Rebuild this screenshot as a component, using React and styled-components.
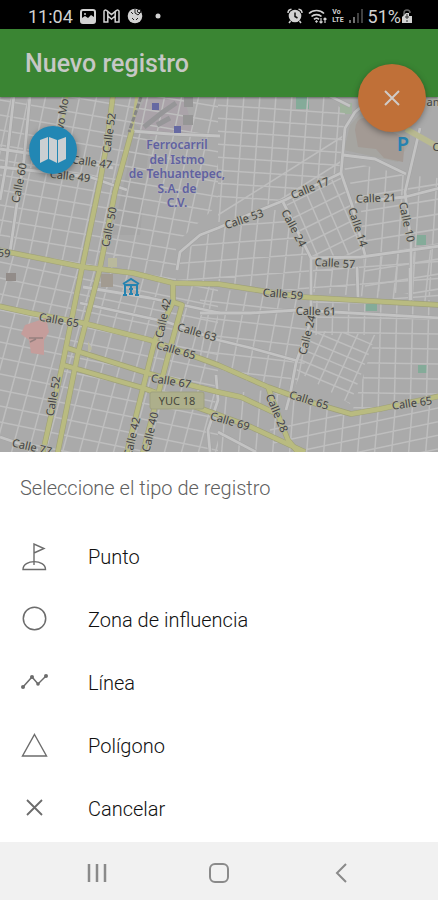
import React from "react";
import styled, { createGlobalStyle } from "styled-components";

const GlobalStyle = createGlobalStyle`
  *, *::before, *::after { box-sizing: border-box; }
  body {
    margin: 0;
    background: #ffffff;
    font-family: Roboto, "Liberation Sans", sans-serif;
  }
  button { font: inherit; border: 0; padding: 0; cursor: pointer; }
`;

const Screen = styled.div`
  display: flex;
  flex-direction: column;
  min-height: 100vh;
`;

const StatusBar = styled.div`
  display: flex;
  align-items: center;
  justify-content: space-between;
  height: 29px;
  padding: 3px 25px 0 28px;
  background: #000000;
  color: #d2d2d2;
  font-size: 18px;
`;

const StatusGroup = styled.div`
  display: flex;
  align-items: center;
  gap: ${(p) => p.$gap}px;
`;

const NetworkLabel = styled.span`
  font-size: 7px;
  line-height: 8px;
  font-weight: 700;
`;

const Battery = styled.span`
  display: flex;
  align-items: center;
`;

const AppBar = styled.header`
  position: relative;
  z-index: 1;
  display: flex;
  align-items: center;
  height: 68px;
  padding: 0 25px;
  background: #3a8533;
  box-shadow: 0 1px 2px rgba(0, 0, 0, 0.4);
`;

const Title = styled.h1`
  margin: 0;
  font-size: 25px;
  font-weight: 500;
  color: #c6c8c5;
`;

const RoundButton = styled.button`
  position: absolute;
  display: flex;
  align-items: center;
  justify-content: center;
  border-radius: 50%;
  box-shadow: 0 2px 6px rgba(0, 0, 0, 0.35);
`;

const CloseButton = styled(RoundButton)`
  right: 12px;
  bottom: -35px;
  width: 68px;
  height: 68px;
  background: #c07038;
  color: #d0cbc8;
`;

const LayersButton = styled(RoundButton)`
  left: 29px;
  top: 29px;
  width: 48px;
  height: 48px;
  background: #2287b4;
  color: #cbcfd2;
`;

const MapArea = styled.main`
  position: relative;
  flex: 1 1 0;
  min-height: 240px;
  background: #adadad;
`;

const MapDrawing = styled.svg`
  position: absolute;
  inset: 0;
  width: 100%;
  height: 100%;
  font-family: "Noto Sans", "Open Sans", sans-serif;
`;

const Sheet = styled.section`
  padding-bottom: 2px;
  background: #ffffff;
`;

const SheetTitle = styled.h2`
  margin: 0;
  padding: 24px 20px 25px;
  font-size: 20px;
  line-height: 24px;
  font-weight: 300;
  color: #606060;
`;

const OptionList = styled.ul`
  margin: 0;
  padding: 0;
  list-style: none;
`;

const Option = styled.button`
  display: flex;
  align-items: center;
  gap: 40px;
  width: 100%;
  height: 63px;
  padding: 0 20px;
  background: transparent;
  color: #101010;
  font-size: 20px;
  font-weight: 300;
  text-align: left;

  svg { color: #6c6c6c; }
`;

const NavBar = styled.nav`
  display: grid;
  grid-template-columns: repeat(3, 1fr);
  height: 58px;
  padding: 4px 36px 0;
  background: #f1f1f1;
`;

const NavButton = styled.button`
  display: flex;
  align-items: center;
  justify-content: center;
  background: transparent;
  color: #8a8a8a;
`;

/* ---------- Map data ---------- */

const mainRoads = [
  "M113 95L107 142L100 182L82 268L62 367L42 456",
  "M132 130L115 192L100 268L78 353L57 456",
  "M-2 250L83 267L133 273L173 283L218 284L301 297L440 305",
  "M-2 306L30 313L83 323L150 340L218 365L268 387L310 402L351 414L380 409L440 396",
  "M67 348L147 373L190 385L218 392L241 397L275 413",
  "M63 365L143 388L213 413L251 427L305 452",
  "M173 283L173 302L155 340L126 456",
  "M173 302L182 305L167 360L142 456",
  "M268 387L280 420L288 440L301 456",
];

const smallMainRoads = ["M67 95L60 135", "M137 95L132 130"];

const whiteRoads = [
  "M30 95L24 160L16 210L10 252",
  "M14 95L6 166L0 200",
  "M177 270L180 252L200 235L218 228L250 214L285 200L341 173L345 128L355 112L376 95",
  "M341 173L352 205L365 255",
  "M283 202L297 230L311 258L311 320L296 363L290 395L286 410",
  "M420 128L405 192L411 242L411 300",
  "M355 202L405 197L440 188",
  "M311 258L361 257L440 246",
  "M200 313L251 313L298 310L440 318",
  "M83 287L150 298L220 313",
  "M80 303L167 322L218 340L251 348L298 361",
  "M0 149L60 158L113 168",
  "M0 167L90 177L127 190",
  "M328 95L350 106",
  "M343 155L375 159L406 174",
  "M132 131L170 134L220 136",
  "M210 452L208 430L218 400L216 375",
  "M0 437L38 450",
  "M218 432L256 452",
  "M357 267L358 297",
  "M410 268L410 302",
];

const parallels = (count, x1, y1, x2, y2, dx, dy) =>
  Array.from({ length: count }, (_, i) =>
    `M${x1 + dx * i} ${y1 + dy * i}L${x2 + dx * i} ${y2 + dy * i}`
  ).join("");

const districts = [
  {
    id: "west",
    area: "M0 97H180L218 97V205L176 243V283L0 250Z",
    lines:
      parallels(17, 0, 55, 220, 92, 0, 15) +
      parallels(20, -5, 95, -46, 290, 17, 0),
  },
  {
    id: "southwest",
    area: "M0 252L175 283L218 284V452H0Z",
    lines:
      parallels(19, 0, 230, 220, 275, 0, 16) +
      parallels(20, 15, 250, -40, 454, 17, 0),
  },
  {
    id: "north",
    area: "M218 97H328L345 112L341 173L285 200L218 228Z",
    lines:
      parallels(8, 200, 104, 350, 114, 0, 13) +
      parallels(9, 228, 95, 219, 222, 16, 0) +
      parallels(3, 218, 215, 345, 135, 0, 24),
  },
  {
    id: "center",
    area: "M283 202L341 173L365 255L311 258Z",
    lines:
      parallels(8, 275, 195, 380, 143, 4, 14) +
      parallels(7, 276, 160, 326, 275, 14, -4),
  },
  {
    id: "northeast",
    area: "M341 160L406 175L438 178V297L365 290L361 210Z",
    lines:
      parallels(12, 340, 170, 445, 153, 0, 15) +
      parallels(8, 370, 160, 361, 300, 17, 0),
  },
  {
    id: "midland",
    area: "M177 260L200 237L285 202L311 260L438 249V303L218 284L177 280Z",
    lines:
      parallels(7, 170, 230, 445, 210, 0, 17) +
      parallels(17, 195, 210, 184, 310, 16, 0),
  },
  {
    id: "southcenter",
    area: "M200 287L310 300V350L290 400L200 360Z",
    lines:
      parallels(7, 190, 282, 312, 296, 0, 17) +
      parallels(8, 215, 280, 192, 400, 17, 0),
  },
  {
    id: "diagonal",
    area: "M311 330L376 335L350 404L295 370Z",
    lines:
      parallels(9, 295, 312, 385, 350, -1, 11) +
      parallels(5, 328, 325, 293, 402, 17, 0),
  },
  {
    id: "southeast",
    area: "M312 300H438V396L352 412L376 335H312Z",
    lines:
      parallels(8, 310, 302, 440, 304, 0, 15) +
      parallels(9, 317, 300, 314, 415, 16, 0),
  },
  {
    id: "south",
    area: "M205 395L268 390L351 417L438 400V452H210Z",
    lines:
      parallels(7, 270, 430, 440, 394, 3, 13) +
      parallels(14, 228, 375, 221, 460, 17, 0),
  },
];

const labels = [
  ["Calle 52", 109, 133, -82],
  ["Calle 50", 109, 227, -79],
  ["Calle 60", 19, 183, -79],
  ["vo Mo", 62, 114, -80],
  ["Calle 47", 92, 162, 8],
  ["Calle 49", 70, 176, 6],
  ["Calle 17", 310, 188, -22],
  ["Calle 53", 244, 219, -19],
  ["Calle 24", 294, 228, 62],
  ["Calle 14", 358, 227, 72],
  ["Calle 10", 407, 222, 78],
  ["Calle 21", 376, 198, -2],
  ["Calle 57", 335, 263, 3],
  ["59", 4, 253, 5],
  ["Calle 65", 59, 320, 10],
  ["Calle 42", 163, 318, -78],
  ["Calle 63", 197, 332, 16],
  ["Calle 65", 176, 350, 16],
  ["Calle 67", 171, 381, 9],
  ["Calle 52", 53, 396, -80],
  ["Calle 42", 132, 437, -77],
  ["Calle 40", 150, 432, -77],
  ["Calle 77", 32, 447, 13],
  ["Calle 59", 283, 294, 5],
  ["Calle 61", 316, 311, 1],
  ["Calle 24", 307, 335, -76],
  ["Calle 28", 277, 413, 67],
  ["Calle 65", 309, 400, 17],
  ["Calle 65", 412, 403, -8],
  ["Calle 69", 230, 421, 16],
  ["C", 436, 147, 0],
  ["an", 433, 102, 0],
];

const railwayName = [
  ["Ferrocarril", 149],
  ["del Istmo", 164],
  ["de Tehuantepec,", 178],
  ["S.A. de", 193],
  ["C.V.", 207],
];

function CityMap() {
  return (
    <MapDrawing viewBox="0 97 438 355" preserveAspectRatio="xMidYMid slice" role="img" aria-label="Mapa">
      <defs>
        {districts.map((d) => (
          <clipPath key={d.id} id={`district-${d.id}`}>
            <path d={d.area} />
          </clipPath>
        ))}
      </defs>
      <rect x="0" y="97" width="438" height="355" fill="#aaaaaa" />

      <path d="M146 97H184L194 134L147 136L134 120Z" fill="#aaa3a9" />
      <path d="M133 122L127 170L112 235H140L150 136Z" fill="#a5a5a5" />
      <path d="M350 125L366 108H410V142L398 162L344 150Z" fill="#a6a5a1" />
      <path d="M355 130Q356 118 364 118L405 138L403 162L384 158L376 149L358 147Z" fill="#a39a94" />
      <path d="M296 97H309V109H296ZM365 304H377V311H365ZM418 365H428V373H418ZM416 235H426V245H416Z" fill="#84ab99" />
      <path d="M340 103H352V114H340Z" fill="#9fb39c" />

      {districts.map((d) => (
        <path
          key={d.id}
          d={d.lines}
          clipPath={`url(#district-${d.id})`}
          fill="none"
          stroke="#bebebe"
          strokeWidth="1.5"
        />
      ))}

      <path d="M25 325L46 318L49 332L44 340V355L31 353L29 340L21 334Z" fill="#c59d9b" />
      <path d="M29 338H43M30 342L36 339" fill="none" stroke="#96807f" strokeWidth="1.5" />
      <path d="M6 273H16V281H6Z" fill="#928c89" />
      <path d="M101 274H113V287H101Z" fill="#a29b91" />
      <path d="M108 258H117V267H108ZM88 341L92 349L88 353Z" fill="#b9b99c" />

      <g fill="none" strokeLinejoin="round">
        {whiteRoads.map((d) => <path key={d} d={d} stroke="#a3a3a3" strokeWidth="3.8" />)}
        {whiteRoads.map((d) => <path key={d} d={d} stroke="#c3c3c3" strokeWidth="2.8" />)}
        <path d="M406 129L440 148" stroke="#b9ba91" strokeWidth="6" />
        {smallMainRoads.map((d) => <path key={d} d={d} stroke="#b9ba86" strokeWidth="3" />)}
        {mainRoads.map((d) => <path key={d} d={d} stroke="#9fa178" strokeWidth="5.6" />)}
        {mainRoads.map((d) => <path key={d} d={d} stroke="#b9bb80" strokeWidth="4.4" />)}
        <path d="M141 97L129 132" stroke="#858585" strokeWidth="3" strokeDasharray="5 2" />
        <path d="M144 127L163 112L176 103M157 125L170 118" stroke="#969698" strokeWidth="5" />
      </g>
      <path d="M184 97H193V107H184ZM183 115H193V125H183Z" fill="#969696" />
      <path d="M152 103H159V110H152ZM174 126H181V133H174Z" fill="#6669a2" />

      <rect x="150" y="392" width="54" height="17" rx="2" fill="#adaf8b" stroke="#9fa180" />
      <text x="177" y="405" fontSize="11" textAnchor="middle" fill="#48483d">YUC 18</text>

      <g fontSize="11" textAnchor="middle" fill="#424242" stroke="#b0b0a4" strokeWidth="1.4" paintOrder="stroke">
        {labels.map(([text, x, y, angle]) => (
          <text key={`${text}-${x}-${y}`} transform={`translate(${x} ${y}) rotate(${angle})`} dy="4">
            {text}
          </text>
        ))}
      </g>

      <g fontSize="12" fontWeight="600" textAnchor="middle" fill="#6061a0" stroke="#b0b0b4" strokeWidth="1.4" paintOrder="stroke">
        {railwayName.map(([text, y]) => <text key={text} x="177" y={y}>{text}</text>)}
      </g>
      <text x="403" y="151" fontSize="20" fontWeight="600" textAnchor="middle" fill="#2682b0">P</text>

      <g fill="none" stroke="#2583b0" strokeWidth="2">
        <path d="M123 284L131 279L139 284M125 284V295M137 284V295M123 295H127M135 295H139M125 285H137" />
        <path d="M131 286V295M129 289H133M129 294H133" />
      </g>
    </MapDrawing>
  );
}

/* ---------- Icons ---------- */

const Icon = ({ width, height = width, children, stroke = 1.5 }) => (
  <svg
    width={width}
    height={height}
    viewBox={`0 0 ${width} ${height}`}
    fill="none"
    stroke="currentColor"
    strokeWidth={stroke}
    aria-hidden="true"
  >
    {children}
  </svg>
);

const PictureIcon = () => (
  <Icon width={16} height={15} stroke={2}>
    <rect x="1" y="1" width="14" height="13" rx="2" />
    <path d="M2 12V9L5 7L8 9L11 6L14 8V13H2Z" fill="currentColor" stroke="none" />
    <circle cx="5" cy="5" r="1" fill="currentColor" stroke="none" />
  </Icon>
);

const MailIcon = () => (
  <Icon width={17} height={14}>
    <path d="M1 13V2.5C1 1 2.5.6 3.8 1.7L8.5 5.5L13.2 1.7C14.5.6 16 1 16 2.5V13H12.2V7L8.5 10L4.8 7V13Z" />
    <path d="M4.8 3V7M12.2 3V7" />
  </Icon>
);

const BallIcon = () => (
  <Icon width={16}>
    <circle cx="8" cy="8" r="7.3" fill="currentColor" stroke="none" />
    <path d="M8 0V5L11 7L15 3M4 4L6 6M5 10L7 12M11 10L9 12" stroke="#222222" strokeWidth="1" />
    <circle cx="12" cy="3" r="1.7" fill="currentColor" stroke="#222222" strokeWidth="1" />
  </Icon>
);

const DotIcon = () => (
  <Icon width={12} height={6}>
    <circle cx="8" cy="3" r="2.5" fill="currentColor" stroke="none" />
  </Icon>
);

const AlarmIcon = () => (
  <Icon width={16}>
    <circle cx="8" cy="8" r="6.3" fill="currentColor" stroke="none" />
    <path d="M8 4.5V8.5L10.5 10" stroke="#111111" />
    <path d="M3.5 13L2 15M12.500 13L14 15M1 5C1 3 2.5 1.5 4.5 1.3M15 5C15 3 13.5 1.5 11.5 1.3" />
  </Icon>
);

const WifiIcon = () => (
  <Icon width={19} height={15} stroke={1.7}>
    <path d="M1 4.5C5 .5 12 .5 16 4.5M3.5 7.5C6 5 11 5 13.5 7.5M6 10.3C7.5 8.8 9.5 8.8 11 10.3" />
    <path d="M8.5 11L10 12.5L8.5 14L7 12.5Z" fill="currentColor" stroke="none" />
    <path d="M13 9V14M11.5 12.5L13 14L14.5 12.5M17 14V9M15.5 10.5L17 9L18.5 10.5" strokeWidth="1.2" />
  </Icon>
);

const SignalIcon = () => (
  <Icon width={14} stroke={2}>
    <path d="M1 14V11M5 14V8" stroke="#707070" />
    <path d="M9 14V4M13 14V0" stroke="#404040" />
  </Icon>
);

const BatteryIcon = () => (
  <Icon width={12} height={15}>
    <path d="M3 6V4C3 0 9 0 9 4" stroke="#666666" />
    <path d="M1 8L5 4H8V7H11V14H1Z" fill="currentColor" stroke="none" />
    <path d="M6 5V10M4 8H8M5 12H7" stroke="#333333" strokeWidth="1" />
  </Icon>
);

const CloseIcon = () => (
  <Icon width={28} stroke={2}>
    <path d="M7 7L21 21M21 7L7 21" />
  </Icon>
);

const FoldedMapIcon = () => (
  <Icon width={26}>
    <path
      d="M0 3L8 0V22L0 26ZM9 0L17 3V26L9 22ZM18 3L26 0V22L18 26Z"
      fill="currentColor"
      stroke="none"
    />
  </Icon>
);

const PointIcon = () => (
  <Icon width={28}>
    <path d="M14 22V1L24 5.5L14 10" strokeWidth="1.4" />
    <path d="M3 26.5C3 16 25.5 16 25.5 26.5Z" strokeWidth="1.4" />
  </Icon>
);

const ZoneIcon = () => (
  <Icon width={28}>
    <circle cx="14.5" cy="12.5" r="11.2" strokeWidth="1.5" />
  </Icon>
);

const LineIcon = () => (
  <Icon width={28}>
    <path d="M3 18L12 8L18 15L26 7" strokeWidth="1.5" />
    <g fill="currentColor" stroke="none">
      <circle cx="3" cy="18" r="2" />
      <circle cx="12" cy="8" r="2" />
      <circle cx="18" cy="15" r="1.8" />
      <circle cx="26" cy="7" r="2" />
    </g>
  </Icon>
);

const PolygonIcon = () => (
  <Icon width={28}>
    <path d="M14.5 2.5L26.5 24H2.5Z" strokeWidth="1.4" />
  </Icon>
);

const CancelIcon = () => (
  <Icon width={28}>
    <path d="M7 5L22 20M22 5L7 20" strokeWidth="1.8" />
  </Icon>
);

const options = [
  { label: "Punto", Glyph: PointIcon },
  { label: "Zona de influencia", Glyph: ZoneIcon },
  { label: "Línea", Glyph: LineIcon },
  { label: "Polígono", Glyph: PolygonIcon },
  { label: "Cancelar", Glyph: CancelIcon },
];

export default function App() {
  return (
    <>
      <GlobalStyle />
      <Screen>
        <StatusBar>
          <StatusGroup $gap={7}>
            <span>11:04</span>
            <PictureIcon />
            <MailIcon />
            <BallIcon />
            <DotIcon />
          </StatusGroup>
          <StatusGroup $gap={5}>
            <AlarmIcon />
            <WifiIcon />
            <NetworkLabel>Vo<br />LTE</NetworkLabel>
            <SignalIcon />
            <Battery>
              <span>51%</span>
              <BatteryIcon />
            </Battery>
          </StatusGroup>
        </StatusBar>

        <AppBar>
          <Title>Nuevo registro</Title>
          <CloseButton type="button" aria-label="Cerrar">
            <CloseIcon />
          </CloseButton>
        </AppBar>

        <MapArea>
          <CityMap />
          <LayersButton type="button" aria-label="Mapa base">
            <FoldedMapIcon />
          </LayersButton>
        </MapArea>

        <Sheet>
          <SheetTitle>Seleccione el tipo de registro</SheetTitle>
          <OptionList>
            {options.map(({ label, Glyph }) => (
              <li key={label}>
                <Option type="button">
                  <Glyph />
                  <span>{label}</span>
                </Option>
              </li>
            ))}
          </OptionList>
        </Sheet>

        <NavBar aria-label="Sistema">
          <NavButton type="button" aria-label="Recientes">
            <Icon width={20} stroke={2.5}>
              <path d="M2 1V19M10 1V19M18 1V19" />
            </Icon>
          </NavButton>
          <NavButton type="button" aria-label="Inicio">
            <Icon width={20} stroke={2}>
              <rect x="1" y="1" width="18" height="18" rx="5" />
            </Icon>
          </NavButton>
          <NavButton type="button" aria-label="Atrás">
            <Icon width={12} height={20} stroke={2}>
              <path d="M11 1L2 10L11 19" />
            </Icon>
          </NavButton>
        </NavBar>
      </Screen>
    </>
  );
}
